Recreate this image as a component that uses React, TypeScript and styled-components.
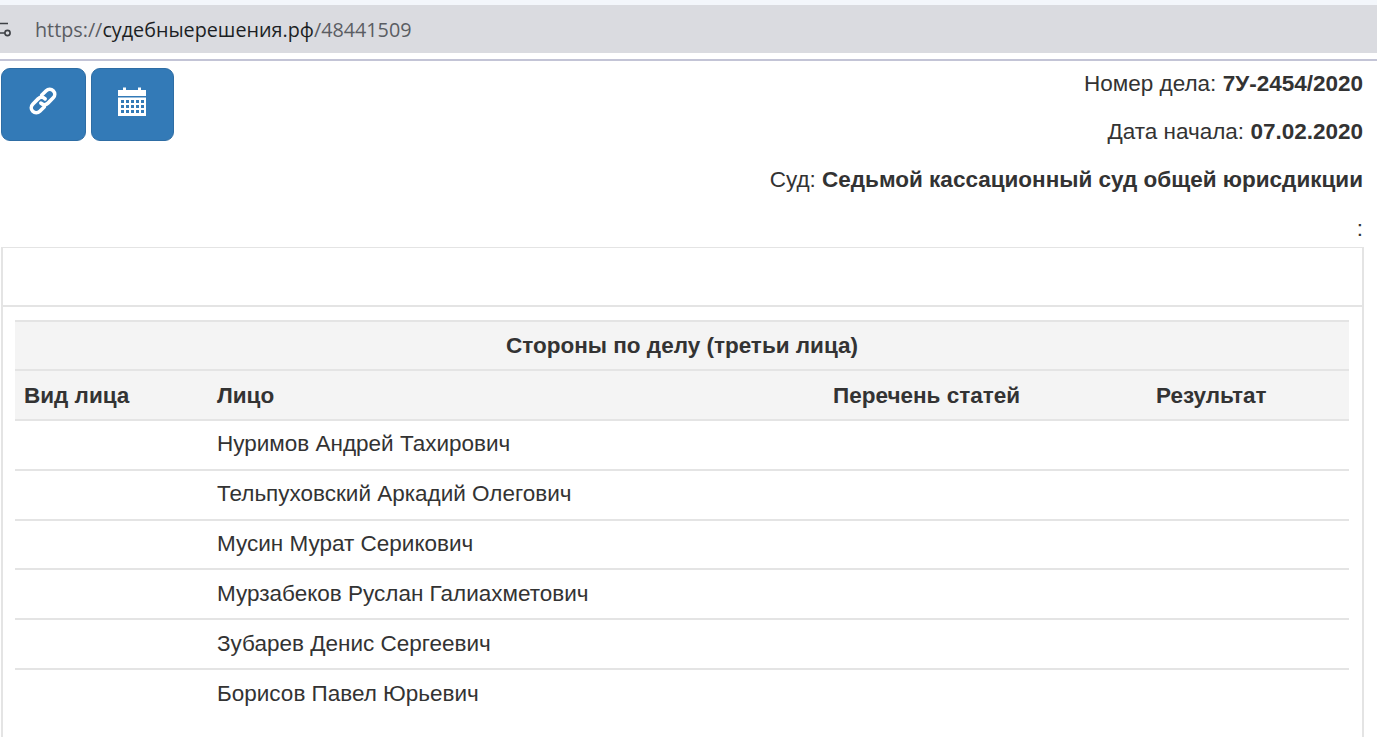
import React from "react";
import styled, { createGlobalStyle } from "styled-components";

const Global = createGlobalStyle`
  html, body { margin: 0; padding: 0; background: #fff; overflow: hidden; }
  body { font-family: "Liberation Sans", Arial, sans-serif; color: #333; font-size: 22.5px; }
  *, *::before, *::after { box-sizing: border-box; }
`;
const Page = styled.div`width: 1377px; height: 737px; overflow: hidden; display: flex; flex-direction: column;`;
const TopStrip = styled.div`height: 5px; flex: none; background: #f3f6fb;`;
const AddressBar = styled.div`
  height: 48px; flex: none; background: #dadbe0; display: flex; align-items: center; padding-left: 35px; position: relative;
  font-family: "Open Sans", "Noto Sans", sans-serif; font-size: 19.75px; color: #5a5d63;
`;
const Host = styled.span`color: #1c1f24;`;
const TuneIcon = styled.svg`position: absolute; left: 0; top: 17px;`;
const Rule = styled.div`height: 2px; flex: none; margin-top: 6px; background: #c3c4d6;`;
const Content = styled.div`flex: none; padding: 7px 13px 0 1px; display: flex; flex-direction: column;`;
const Head = styled.div`display: flex; justify-content: space-between; height: 179px; flex: none;`;
const Buttons = styled.div`display: flex; gap: 5px; align-items: flex-start;`;
const IconButton = styled.button<{ $w: number }>`
  width: ${(p) => p.$w}px; height: 73px; padding: 0 2px 8px 0; background: #337ab7; border: 1px solid #2e6da4; border-radius: 9px;
  display: flex; align-items: center; justify-content: center; flex: none;
`;
const Info = styled.div`display: flex; flex-direction: column; align-items: flex-end; padding-right: 1px;`;
const InfoLine = styled.div`height: 48.2px; flex: none; line-height: 32px; text-align: right; white-space: nowrap;`;
const Panel = styled.div`border: 2px solid #e4e4e4; border-bottom: 0; border-top-width: 1px; height: 490px;`;
const PanelHead = styled.div`height: 59px; border-bottom: 2px solid #e4e4e4;`;
const PanelBody = styled.div`padding: 13px 12px 0 12px;`;
const Table = styled.table`width: 1334px; border-collapse: collapse; table-layout: fixed;`;
const Col = styled.col<{ $w: number }>`width: ${(p) => p.$w}px;`;
const Title = styled.th`background: #f4f4f4; height: 49px; padding: 1px 0 0; text-align: center; border-top: 2px solid #e4e4e4; border-bottom: 2px solid #e4e4e4;`;
const Th = styled.th`
  background: #f4f4f4; height: 50px; padding: 2px 10px 0; text-align: left; border-bottom: 2px solid #e4e4e4; white-space: nowrap;
  &:first-child { padding-left: 9px; }
`;
const Td = styled.td`height: 49.8px; padding: 0 10px 1px; border-bottom: 2px solid #e4e4e4; white-space: nowrap;`;
const LastTd = styled(Td)`border-bottom: 0;`;

const people = ["Нуримов Андрей Тахирович", "Тельпуховский Аркадий Олегович", "Мусин Мурат Серикович", "Мурзабеков Руслан Галиахметович", "Зубарев Денис Сергеевич", "Борисов Павел Юрьевич"];

export default function App() {
  return (
    <Page>
      <Global />
      <TopStrip />
      <AddressBar>
        <TuneIcon width="12" height="15" viewBox="0 0 12 15" fill="none" stroke="#3e4146" strokeWidth="1.6">
          <path d="M0 1.5h8M0 11h5" />
          <circle cx="7.5" cy="11" r="2.6" />
        </TuneIcon>
        <span>https://<Host>судебныерешения.рф</Host>/48441509</span>
      </AddressBar>
      <Rule />
      <Content>
        <Head>
          <Buttons>
            <IconButton $w={85}>
              <svg width="28" height="28" viewBox="-14 -14 28 28" fill="none" stroke="#fff" strokeWidth="3.6" strokeLinecap="round">
                <path transform="rotate(45)" d="M-5 -3 V-9.5 A5 5 0 0 1 5 -9.5 V-2 A5 5 0 0 1 0 3" />
                <path transform="rotate(225)" d="M-5 -3 V-9.5 A5 5 0 0 1 5 -9.5 V-2 A5 5 0 0 1 0 3" />
              </svg>
            </IconButton>
            <IconButton $w={83}>
              <svg width="28" height="30" viewBox="0 0 28 30">
                <path fill="#fff" d="M0 4h5V1.5h3V4h12V1.5h3V4h5v6H0z" />
                <path fill="#fff" fillRule="evenodd" d="M0 11.5h28V30H0z M3 14h3v3H3z M8 14h3v3H8z M13 14h3v3h-3z M18 14h3v3h-3z M23 14h3v3h-3z M3 19h3v3H3z M8 19h3v3H8z M13 19h3v3h-3z M18 19h3v3h-3z M23 19h3v3h-3z M3 24h3v3H3z M8 24h3v3H8z M13 24h3v3h-3z M18 24h3v3h-3z M23 24h3v3h-3z" />
              </svg>
            </IconButton>
          </Buttons>
          <Info>
            <InfoLine>Номер дела: <b>7У-2454/2020</b></InfoLine>
            <InfoLine>Дата начала: <b>07.02.2020</b></InfoLine>
            <InfoLine>Суд: <b>Седьмой кассационный суд общей юрисдикции</b></InfoLine>
            <InfoLine>:</InfoLine>
          </Info>
        </Head>
        <Panel>
          <PanelHead />
          <PanelBody>
            <Table>
              <colgroup>
                <Col $w={192} />
                <Col $w={616} />
                <Col $w={323} />
                <Col $w={203} />
              </colgroup>
              <thead>
                <tr><Title colSpan={4}>Стороны по делу (третьи лица)</Title></tr>
                <tr>
                  <Th>Вид лица</Th>
                  <Th>Лицо</Th>
                  <Th>Перечень статей</Th>
                  <Th>Результат</Th>
                </tr>
              </thead>
              <tbody>
                {people.map((p, i) => {
                  const C = i === people.length - 1 ? LastTd : Td;
                  return <tr key={p}><C /><C>{p}</C><C /><C /></tr>;
                })}
              </tbody>
            </Table>
          </PanelBody>
        </Panel>
      </Content>
    </Page>
  );
}
